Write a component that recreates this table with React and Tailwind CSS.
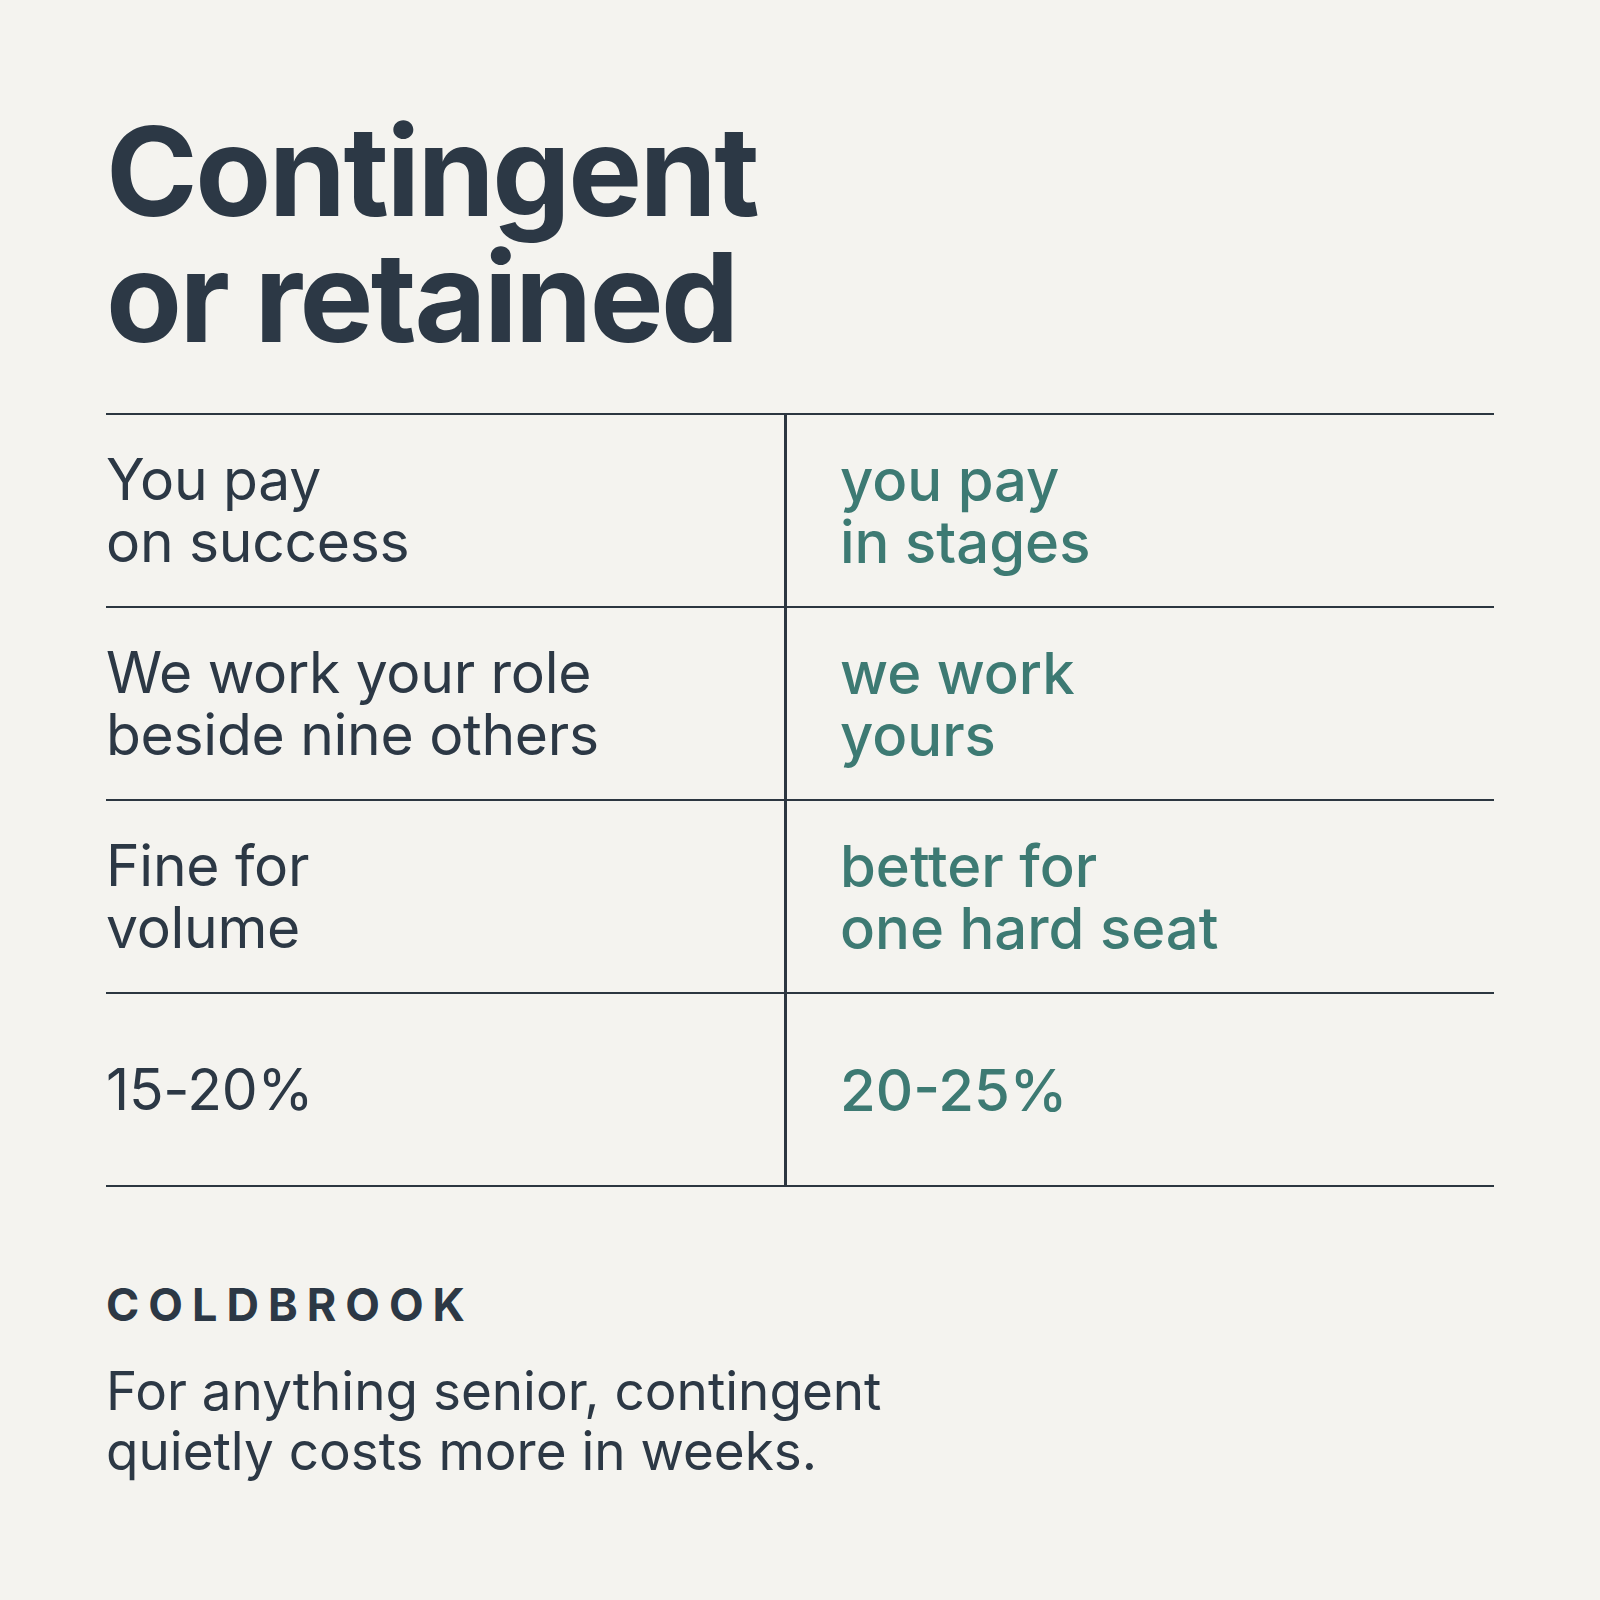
const rows = [
  { left: ['You pay', 'on success'], right: ['you pay', 'in stages'] },
  { left: ['We work your role', 'beside nine others'], right: ['we work', 'yours'] },
  { left: ['Fine for', 'volume'], right: ['better for', 'one hard seat'] },
  { left: ['15-20%'], right: ['20-25%'] },
];

function Cell({ lines, accent }) {
  return (
    <div
      className={
        accent
          ? 'flex flex-col justify-center pl-[53px] text-[58px] leading-[62px] font-medium text-[#3d7a73]'
          : 'flex flex-col justify-center border-r-[3px] border-[#2c3640] text-[57px] leading-[62px] tracking-[-0.005em] text-[#2c3845]'
      }
    >
      {lines.map((l) => (
        <span key={l}>{l}</span>
      ))}
    </div>
  );
}

export default function App() {
  return (
    <div
      className="w-[1600px] h-[1600px] bg-[#f4f3ef] pl-[106px] pr-[106px] pt-[108px] text-[#2c3845]"
      style={{ fontFamily: 'Inter, "Liberation Sans", sans-serif' }}
    >
      <h1 className="text-[124px] leading-[126px] font-bold tracking-[-0.02em]">
        Contingent
        <br />
        or retained
      </h1>

      <div className="mt-[53px] border-t-2 border-[#2c3640]">
        {rows.map((r, i) => (
          <div key={i} className="grid grid-cols-[681px_1fr] h-[193px] border-b-2 border-[#2c3640]">
            <Cell lines={r.left} />
            <Cell lines={r.right} accent />
          </div>
        ))}
      </div>

      <div className="mt-[95px] text-[45px] leading-[45px] font-bold tracking-[0.2em]">COLDBROOK</div>
      <p className="mt-[34px] text-[53px] leading-[60px]">
        For anything senior, contingent
        <br />
        quietly costs more in weeks.
      </p>
    </div>
  );
}
